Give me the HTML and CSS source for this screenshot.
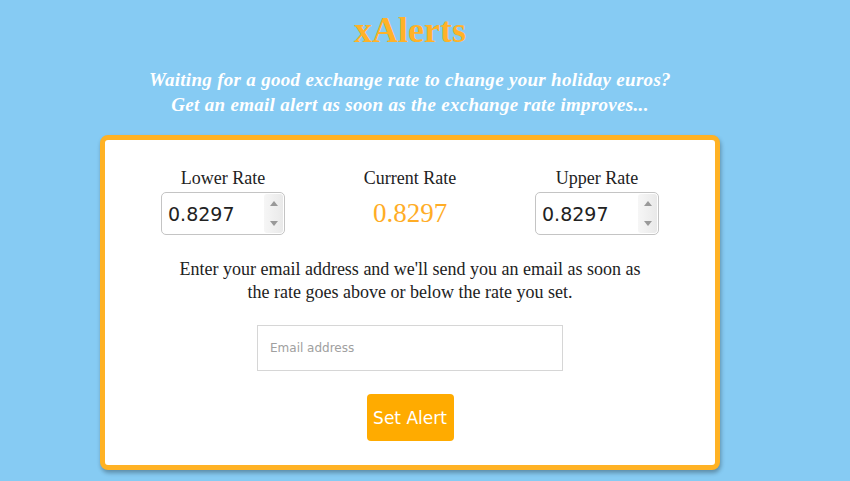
FILE: index.html
```html
<!DOCTYPE html>
<html>
<head>
<meta charset="utf-8">
<link rel="stylesheet" href="styles.css">
</head>
<body>
<div class="page">
  <h1 class="title">xAlerts</h1>
  <p class="subtitle">Waiting for a good exchange rate to change your holiday euros?<br>Get an email alert as soon as the exchange rate improves...</p>
  <div class="card">
    <div class="rates">
      <div class="rate">
        <div class="label">Lower Rate</div>
        <div class="spin">
          <input class="spin-input" type="text" value="0.8297">
          <div class="spin-btns"><span class="up"></span><span class="down"></span></div>
        </div>
      </div>
      <div class="rate">
        <div class="label">Current Rate</div>
        <div class="current">0.8297</div>
      </div>
      <div class="rate">
        <div class="label">Upper Rate</div>
        <div class="spin">
          <input class="spin-input" type="text" value="0.8297">
          <div class="spin-btns"><span class="up"></span><span class="down"></span></div>
        </div>
      </div>
    </div>
    <p class="info">Enter your email address and we'll send you an email as soon as<br>the rate goes above or below the rate you set.</p>
    <input class="email" type="text" placeholder="Email address">
    <button class="btn">Set Alert</button>
  </div>
</div>
</body>
</html>
```
FILE: styles.css
```css
html, body {
  margin: 0;
  padding: 0;
  background: #86cbf3;
  height: 100%;
  overflow: hidden;
}
.page {
  width: 820px;
  text-align: center;
  font-family: "Liberation Serif", "Times New Roman", serif;
  display: flex;
  flex-direction: column;
  align-items: center;
}
.title {
  margin: 10px 0 0;
  font-size: 36px;
  line-height: 41px;
  font-weight: bold;
  color: #ffb228;
}
.subtitle {
  margin: 16px 0 0;
  font-size: 19px;
  line-height: 25px;
  font-weight: bold;
  font-style: italic;
  color: #ffffff;
  letter-spacing: 0.3px;
}
.card {
  margin-top: 18px;
  width: 610px;
  background: #fff;
  border: 5px solid #ffb224;
  border-radius: 8px;
  box-shadow: 1px 3px 4px rgba(0,0,0,0.3);
  display: flex;
  flex-direction: column;
  align-items: center;
  padding: 27px 0 24px;
}
.rates {
  display: flex;
  justify-content: space-between;
  width: 498px;
}
.rate {
  display: flex;
  flex-direction: column;
  align-items: center;
  width: 124px;
}
.label {
  font-size: 18px;
  line-height: 22px;
  color: #222;
}
.spin {
  margin-top: 3px;
  width: 124px;
  height: 43px;
  box-sizing: border-box;
  border: 1px solid #c4c4c4;
  border-radius: 5px;
  display: flex;
  overflow: hidden;
  background: #fff;
}
.spin-input {
  flex: 1;
  min-width: 0;
  border: none;
  outline: none;
  padding: 0 0 0 6px;
  font-family: "DejaVu Sans", sans-serif;
  font-size: 19px;
  color: #222;
  background: transparent;
}
.spin-btns {
  width: 19px;
  margin: 1px 1px 1px 0;
  border-radius: 3px;
  background: linear-gradient(to right, #f6f6f6, #e9e9e9);
  display: flex;
  flex-direction: column;
  justify-content: space-around;
  align-items: center;
}
.up, .down {
  width: 0;
  height: 0;
  border-left: 4px solid transparent;
  border-right: 4px solid transparent;
}
.up { border-bottom: 5px solid #999; }
.down { border-top: 5px solid #999; }
.current {
  margin-top: 3px;
  font-size: 27px;
  line-height: 43px;
  color: #ffad26;
}
.info {
  margin: 23px 0 0;
  font-size: 18px;
  line-height: 23px;
  color: #222;
}
.email {
  margin-top: 21px;
  width: 306px;
  height: 46px;
  box-sizing: border-box;
  border: 1px solid #d6d6d6;
  padding: 0 12px;
  font-family: "DejaVu Sans", sans-serif;
  font-size: 12px;
  outline: none;
}
.email::placeholder { color: #a0a0a0; }
.btn {
  margin-top: 23px;
  width: 87px;
  height: 47px;
  border: none;
  border-radius: 4px;
  background: #ffab00;
  color: #fff;
  font-family: "DejaVu Sans", sans-serif;
  font-size: 17px;
  padding: 0;
}
```
